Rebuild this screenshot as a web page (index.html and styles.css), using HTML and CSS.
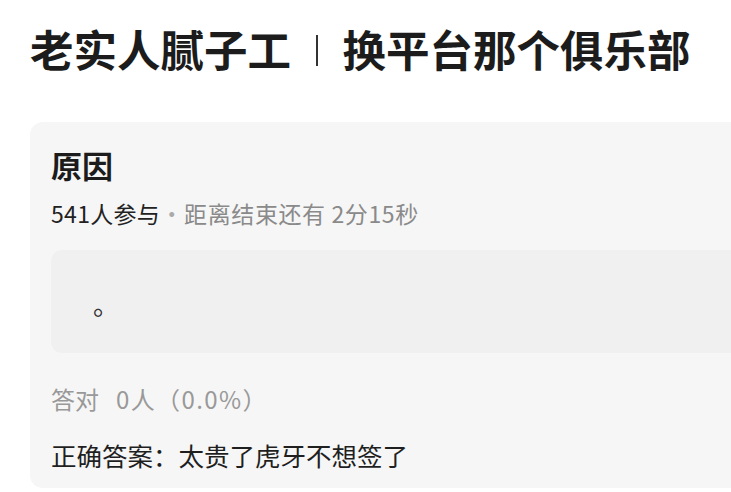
FILE: index.html
```html
<!DOCTYPE html>
<html lang="zh-CN">
<head>
  <meta charset="UTF-8">
  <title>原因</title>
  <link rel="stylesheet" href="styles.css">
</head>
<body>
  <h1 class="title">老实人腻子工<span class="sep"></span>换平台那个俱乐部</h1>

  <div class="quiz">
    <div class="quiz-name">原因</div>
    <div class="quiz-meta">
      <span class="joined">541人参与</span><span class="dot">·</span>距离结束还有 2分15秒
    </div>
    <div class="option">
      <span class="option-text">。</span>
    </div>
    <div class="stat">答对<span class="stat-num">0人（0.0%）</span></div>
    <div class="answer">正确答案：太贵了虎牙不想签了</div>
  </div>
</body>
</html>
```

FILE: styles.css
```css
html, body {
  margin: 0;
  background-color: #ffffff;
  overflow: hidden;
}
body {
  font-family: "Noto Sans CJK SC", "Noto Sans", sans-serif;
  color: #1c1c1c;
  padding: 24px 0 0 30px;
}
.title {
  margin: 0 0 48px 0;
  font-size: 43.5px;
  line-height: 50px;
  font-weight: 700;
  white-space: nowrap;
}
.sep {
  display: inline-block;
  width: 1.5px;
  height: 31px;
  background-color: #333;
  margin: 0 25px;
  vertical-align: 1px;
}
.quiz {
  width: 760px;
  background-color: #f6f6f6;
  border-radius: 13px;
  padding: 24px 0 17px 21px;
  box-sizing: border-box;
}
.quiz-name {
  font-size: 31px;
  line-height: 38px;
  font-weight: 700;
}
.quiz-meta {
  margin-top: 14px;
  font-size: 23px;
  line-height: 30px;
  color: #8a8a8a;
  letter-spacing: 0.6px;
  white-space: nowrap;
}
.joined {
  color: #222;
  letter-spacing: 0.3px;
}
.dot {
  display: inline-block;
  width: 24px;
  text-align: center;
  color: #aaa;
}
.option {
  margin-top: 22px;
  height: 103px;
  background-color: #f0f0f0;
  border-radius: 11px;
  padding-left: 42px;
  display: flex;
  align-items: center;
}
.option-text {
  font-size: 26px;
  color: #333;
  margin-top: 4px;
}
.stat {
  margin-top: 31px;
  font-size: 24px;
  line-height: 30px;
  color: #999;
}
.stat-num {
  margin-left: 17px;
  letter-spacing: 1.4px;
}
.answer {
  margin-top: 25px;
  font-size: 25.5px;
  line-height: 32px;
  color: #1f1f1f;
}
```
